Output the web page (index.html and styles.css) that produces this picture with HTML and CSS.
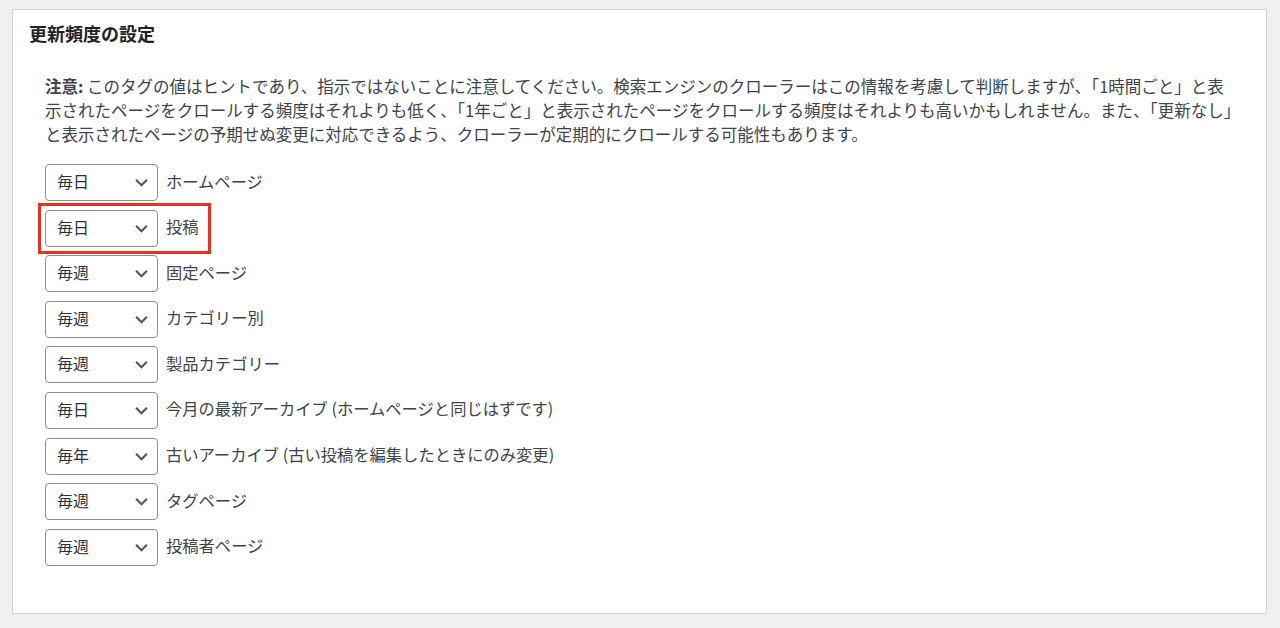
FILE: index.html
```html
<!DOCTYPE html>
<html lang="ja">
<head>
    <meta charset="UTF-8">
    <meta name="viewport" content="width=device-width, initial-scale=1.0">
    <title>更新頻度の設定</title>
    <link rel="stylesheet" href="styles.css">
</head>
<body>
    <div class="panel">
        <h2 class="panel-title">更新頻度の設定</h2>
        <div class="panel-body">
            <p class="note"><strong>注意:</strong> このタグの値はヒントであり、指示ではないことに注意してください。検索エンジンのクローラーはこの情報を考慮して判断しますが、「1時間ごと」と表<br>示されたページをクロールする頻度はそれよりも低く、「1年ごと」と表示されたページをクロールする頻度はそれよりも高いかもしれません。また、「更新なし」<br>と表示されたページの予期せぬ変更に対応できるよう、クローラーが定期的にクロールする可能性もあります。</p>

            <div class="freq-list">
                <div class="freq-row">
                    <div class="select-wrap">
                        <select class="freq-select"><option>毎日</option></select>
                        <svg class="chevron" viewBox="0 0 12 8"><path d="M1 1.5l5 5 5-5"/></svg>
                    </div>
                    <label class="freq-label">ホームページ</label>
                </div>
                <div class="freq-row highlight">
                    <div class="select-wrap">
                        <select class="freq-select"><option>毎日</option></select>
                        <svg class="chevron" viewBox="0 0 12 8"><path d="M1 1.5l5 5 5-5"/></svg>
                    </div>
                    <label class="freq-label">投稿</label>
                </div>
                <div class="freq-row">
                    <div class="select-wrap">
                        <select class="freq-select"><option>毎週</option></select>
                        <svg class="chevron" viewBox="0 0 12 8"><path d="M1 1.5l5 5 5-5"/></svg>
                    </div>
                    <label class="freq-label">固定ページ</label>
                </div>
                <div class="freq-row">
                    <div class="select-wrap">
                        <select class="freq-select"><option>毎週</option></select>
                        <svg class="chevron" viewBox="0 0 12 8"><path d="M1 1.5l5 5 5-5"/></svg>
                    </div>
                    <label class="freq-label">カテゴリー別</label>
                </div>
                <div class="freq-row">
                    <div class="select-wrap">
                        <select class="freq-select"><option>毎週</option></select>
                        <svg class="chevron" viewBox="0 0 12 8"><path d="M1 1.5l5 5 5-5"/></svg>
                    </div>
                    <label class="freq-label">製品カテゴリー</label>
                </div>
                <div class="freq-row">
                    <div class="select-wrap">
                        <select class="freq-select"><option>毎日</option></select>
                        <svg class="chevron" viewBox="0 0 12 8"><path d="M1 1.5l5 5 5-5"/></svg>
                    </div>
                    <label class="freq-label">今月の最新アーカイブ (ホームページと同じはずです)</label>
                </div>
                <div class="freq-row">
                    <div class="select-wrap">
                        <select class="freq-select"><option>毎年</option></select>
                        <svg class="chevron" viewBox="0 0 12 8"><path d="M1 1.5l5 5 5-5"/></svg>
                    </div>
                    <label class="freq-label">古いアーカイブ (古い投稿を編集したときにのみ変更)</label>
                </div>
                <div class="freq-row">
                    <div class="select-wrap">
                        <select class="freq-select"><option>毎週</option></select>
                        <svg class="chevron" viewBox="0 0 12 8"><path d="M1 1.5l5 5 5-5"/></svg>
                    </div>
                    <label class="freq-label">タグページ</label>
                </div>
                <div class="freq-row">
                    <div class="select-wrap">
                        <select class="freq-select"><option>毎週</option></select>
                        <svg class="chevron" viewBox="0 0 12 8"><path d="M1 1.5l5 5 5-5"/></svg>
                    </div>
                    <label class="freq-label">投稿者ページ</label>
                </div>
            </div>
        </div>
    </div>
</body>
</html>
```

FILE: styles.css
```css
html, body {
    height: 100%;
}

body {
    margin: 0;
    padding: 9px 13px 14px 12px;
    box-sizing: border-box;
    background: #f0f0f1;
    font-family: "Noto Sans CJK JP", "Noto Sans", sans-serif;
    color: #3c434a;
}

.panel {
    height: 100%;
    box-sizing: border-box;
    background: #fff;
    border: 1px solid #d3d3d6;
    padding: 11px 16px 0 16px;
}

.panel-title {
    margin: 0;
    font-size: 18px;
    line-height: 24px;
    font-weight: 700;
    color: #1d2327;
}

.panel-body {
    padding: 29px 0 0 16px;
}

.note {
    margin: 0;
    font-size: 16.5px;
    line-height: 24px;
    white-space: nowrap;
}

.note strong {
    font-weight: 700;
}

.freq-list {
    margin-top: 18px;
    display: flex;
    flex-direction: column;
    gap: 8.6px;
}

.freq-row {
    display: flex;
    align-items: center;
    gap: 8px;
    width: max-content;
}

.freq-row.highlight {
    outline: 3px solid #e8321f;
    outline-offset: 4px;
    padding-right: 5px;
}

.select-wrap {
    position: relative;
}

.freq-select {
    appearance: none;
    -webkit-appearance: none;
    display: block;
    width: 113px;
    height: 37px;
    margin: 0;
    padding: 0 0 3px 11px;
    border: 1px solid #8c8f94;
    border-radius: 4px;
    background: #fff;
    font-family: inherit;
    font-size: 16px;
    color: #2c3338;
}

.chevron {
    position: absolute;
    right: 10px;
    top: 14px;
    width: 13px;
    height: 9px;
    pointer-events: none;
    fill: none;
    stroke: #50575e;
    stroke-width: 2;
}

.freq-label {
    font-size: 16.3px;
    line-height: 24px;
    padding-bottom: 4px;
}
```
